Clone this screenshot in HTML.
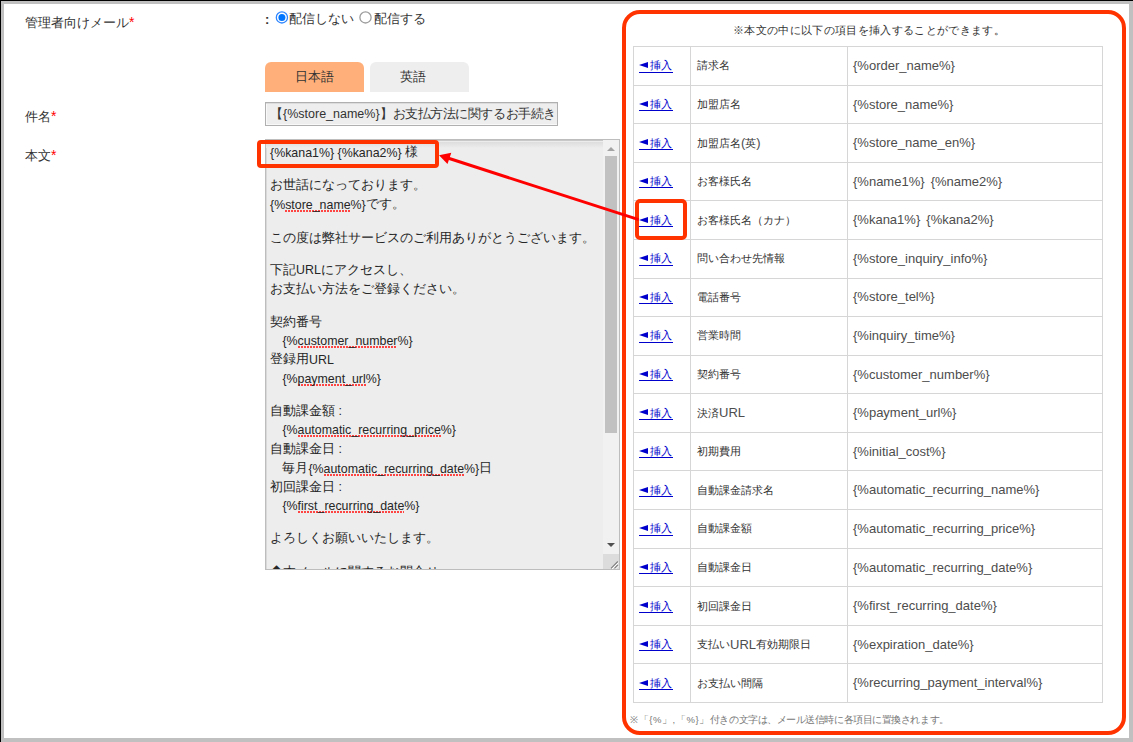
<!DOCTYPE html>
<html><head><meta charset="utf-8">
<style>
html,body{margin:0;padding:0;width:1133px;height:742px;overflow:hidden;background:#000;}
body{font-family:"Liberation Sans",sans-serif;color:#333;position:relative;}
.a{position:absolute;white-space:nowrap;}
#frame{position:absolute;left:1px;top:1px;width:1132px;height:741px;background:#c0c0c0;}
#page{position:absolute;left:4px;top:4px;width:1125px;height:734px;background:#fff;}
.lbl{font-size:13px;color:#333;line-height:16px;}
.req{color:#ff0000;position:relative;top:0px;font-size:14px;}
.radio{position:absolute;width:12px;height:12px;border-radius:50%;box-sizing:border-box;}
.tab{position:absolute;top:62px;height:30px;border-radius:6px 6px 0 0;font-size:13px;text-align:center;line-height:30px;color:#333;}
#subj{position:absolute;left:265px;top:102px;width:293px;height:24px;box-sizing:border-box;border:1px solid #b0b0b0;box-shadow:inset 0 1px 0 #dcdcdc,inset 1px -1px 0 #f9f9f9;background:#eeeeee;font-size:12.5px;line-height:22px;padding-left:4px;color:#333;white-space:nowrap;overflow:hidden;}
#ta{position:absolute;left:265px;top:139px;width:355px;height:431px;box-sizing:border-box;border:1px solid #bdbdbd;box-shadow:inset 1px 0 0 #d9d9d9;background:#ededed;overflow:hidden;}
.tl{position:absolute;font-size:12.9px;line-height:16px;color:#262626;white-space:nowrap;}
.sp{background-image:linear-gradient(45deg,transparent 40%,#f44 40%,#f44 60%,transparent 60%),linear-gradient(-45deg,transparent 40%,#f44 40%,#f44 60%,transparent 60%);background-size:3px 2px;background-repeat:repeat-x;background-position:0 100%;padding-bottom:0px;}
#sb{position:absolute;left:337px;top:0;width:16px;bottom:0;background:#f1f1f1;}
#thumb{position:absolute;left:2px;width:12px;top:16px;height:277px;background:#c1c1c1;}
#sbup{position:absolute;left:4px;top:6.5px;width:0;height:0;border-left:4px solid transparent;border-right:4px solid transparent;border-bottom:4px solid #a3a3a3;}
#sbdn{position:absolute;left:4px;top:403px;width:0;height:0;border-left:4px solid transparent;border-right:4px solid transparent;border-top:4px solid #505050;}
#grip{position:absolute;left:0;top:414px;width:16px;height:15px;background:#dcdcdc;}
#tbl .hl{position:absolute;left:633px;width:470px;height:1px;background:#d6d6d6;}
#tbl .vl{position:absolute;top:46px;height:657px;width:1px;background:#d6d6d6;}
#tbl .cl{position:absolute;font-size:11px;line-height:16px;color:#333;white-space:nowrap;}
.lnk{color:#0000cc;text-decoration:underline;}
#redframe{position:absolute;left:622px;top:10px;width:504px;height:725px;box-sizing:border-box;border:4px solid #ff3300;border-radius:18px;}
#box1{position:absolute;left:257px;top:140px;width:182px;height:28px;box-sizing:border-box;border:4px solid #ff3300;border-radius:4px;}
#box2{position:absolute;left:635px;top:199px;width:52px;height:41px;box-sizing:border-box;border:4px solid #ff3300;border-radius:5px;}
#hdr{position:absolute;left:733px;top:22.6px;font-size:11.3px;letter-spacing:0.33px;color:#333;white-space:nowrap;}
#foot{position:absolute;left:630px;top:713px;font-size:9.5px;color:#777;white-space:nowrap;}
#arrow{position:absolute;left:0;top:0;}

.tl .ln{font-size:12.4px;position:relative;top:0.5px;}
#tbl .cl .ln{font-size:13px;color:#4d4d4d;position:relative;top:0.7px;word-spacing:2.5px;}
#tbl .lnk{color:#0000cc;text-decoration:none;}
#tbl .tri{position:absolute;left:639px;width:0;height:0;border-right:9px solid #0000cc;border-top:3.5px solid transparent;border-bottom:3.5px solid transparent;}
#tbl .ul{position:absolute;left:639px;width:34px;height:1px;background:#0000cc;}
#tashade{position:absolute;left:0;top:0;width:337px;height:8px;background:linear-gradient(#c8c8c8 0px,#c8c8c8 1px,#ececec 1px,#ececec 2px,#dddddd 2px,#e2e2e2 4px,#ededed 8px);}

</style></head><body>
<div id="frame"></div>
<div id="page"></div>
<div class="a lbl" style="left:25px;top:14px;">管理者向けメール<span class="req">*</span></div>
<div class="a lbl" style="left:25px;top:108px;">件名<span class="req">*</span></div>
<div class="a lbl" style="left:25px;top:147px;">本文<span class="req">*</span></div>
<div class="a lbl" style="left:265px;top:11.5px;font-weight:bold;">:</div>
<svg style="position:absolute;left:275px;top:11px" width="14" height="14"><circle cx="6.9" cy="6.4" r="5.6" fill="#fff" stroke="#2f86ff" stroke-width="1.3"/><circle cx="6.9" cy="6.4" r="3.5" fill="#0075ff"/></svg>
<div class="a lbl" style="left:289px;top:11px;">配信しない</div>
<svg style="position:absolute;left:359px;top:11px" width="14" height="14"><circle cx="6.5" cy="6.4" r="5.6" fill="#fff" stroke="#9c9c9c" stroke-width="1.3"/></svg>
<div class="a lbl" style="left:374px;top:11px;">配信する</div>
<div class="tab" style="left:265px;width:99px;background:#ffb07a;">日本語</div>
<div class="tab" style="left:370px;width:99px;background:#eeeeee;text-indent:-14px;">英語</div>
<div id="subj">【{%store_name%}】<span style="letter-spacing:-0.45px">お支払方法に関するお手続き</span></div>
<div id="hdr">※本文の中に以下の項目を挿入することができます。</div>
<div id="ta"><div id="tashade"></div>
<div class="tl" style="top:4.3px;left:4.0px"><span class="ln">{%kana1%} {%kana2%}</span> 様</div>
<div class="tl" style="top:37.0px;left:4.0px">お世話になっております。</div>
<div class="tl" style="top:56.0px;left:4.0px"><span class="ln">{%<span class="sp">store_name</span>%}</span>です。</div>
<div class="tl" style="top:89.5px;left:4.0px">この度は弊社サービスのご利用ありがとうございます。</div>
<div class="tl" style="top:121.9px;left:4.0px">下記<span class="ln">URL</span>にアクセスし、</div>
<div class="tl" style="top:141.0px;left:4.0px">お支払い方法をご登録ください。</div>
<div class="tl" style="top:173.7px;left:4.0px">契約番号</div>
<div class="tl" style="top:192.7px;left:16.4px"><span class="ln">{%<span class="sp">customer_number</span>%}</span></div>
<div class="tl" style="top:211.2px;left:4.0px">登録用<span class="ln">URL</span></div>
<div class="tl" style="top:230.4px;left:16.4px"><span class="ln">{%<span class="sp">payment_url</span>%}</span></div>
<div class="tl" style="top:262.9px;left:4.0px">自動課金額 <span class="ln">:</span></div>
<div class="tl" style="top:281.9px;left:16.4px"><span class="ln">{%<span class="sp">automatic_recurring_price</span>%}</span></div>
<div class="tl" style="top:300.6px;left:4.0px">自動課金日 <span class="ln">:</span></div>
<div class="tl" style="top:320.0px;left:16.4px">毎月<span class="ln">{%<span class="sp">automatic_recurring_date</span>%}</span>日</div>
<div class="tl" style="top:338.8px;left:4.0px">初回課金日 <span class="ln">:</span></div>
<div class="tl" style="top:357.8px;left:16.4px"><span class="ln">{%<span class="sp">first_recurring_date</span>%}</span></div>
<div class="tl" style="top:389.6px;left:4.0px">よろしくお願いいたします。</div>
<div class="tl" style="top:423.5px;left:4.0px">◆本メールに関するお問合せ</div>
<div id="sb"><div id="sbup"></div><div id="thumb"></div><div id="sbdn"></div><div id="grip"><svg width="16" height="15" style="position:absolute;left:0;top:0"><path d="M9 15 L15.5 8.5 M12.5 15 L15.5 12" stroke="#fff" stroke-width="1" fill="none"/><path d="M8 14.3 L14.8 7.5 M11.5 14.3 L14.8 11" stroke="#808080" stroke-width="1.1" fill="none"/></svg></div></div>
</div>
<div id="tbl">
<div class="hl" style="top:46px"></div>
<div class="hl" style="top:85px"></div>
<div class="hl" style="top:123px"></div>
<div class="hl" style="top:162px"></div>
<div class="hl" style="top:200px"></div>
<div class="hl" style="top:239px"></div>
<div class="hl" style="top:278px"></div>
<div class="hl" style="top:316px"></div>
<div class="hl" style="top:355px"></div>
<div class="hl" style="top:393px"></div>
<div class="hl" style="top:432px"></div>
<div class="hl" style="top:470px"></div>
<div class="hl" style="top:509px"></div>
<div class="hl" style="top:548px"></div>
<div class="hl" style="top:586px"></div>
<div class="hl" style="top:625px"></div>
<div class="hl" style="top:663px"></div>
<div class="hl" style="top:702px"></div>
<div class="vl" style="left:633px"></div>
<div class="vl" style="left:690px"></div>
<div class="vl" style="left:847px"></div>
<div class="vl" style="left:1102px"></div>
<div class="tri" style="top:62.1px"></div><div class="cl lnk" style="top:57.3px;left:650px">挿入</div><div class="ul" style="top:72px"></div><div class="cl" style="top:57.3px;left:697px">請求名</div><div class="cl" style="top:57.3px;left:853px"><span class="ln">{%order_name%}</span></div>
<div class="tri" style="top:100.7px"></div><div class="cl lnk" style="top:95.9px;left:650px">挿入</div><div class="ul" style="top:110px"></div><div class="cl" style="top:95.9px;left:697px">加盟店名</div><div class="cl" style="top:95.9px;left:853px"><span class="ln">{%store_name%}</span></div>
<div class="tri" style="top:139.3px"></div><div class="cl lnk" style="top:134.5px;left:650px">挿入</div><div class="ul" style="top:149px"></div><div class="cl" style="top:134.5px;left:697px">加盟店名<span class="ln">(</span>英<span class="ln">)</span></div><div class="cl" style="top:134.5px;left:853px"><span class="ln">{%store_name_en%}</span></div>
<div class="tri" style="top:177.9px"></div><div class="cl lnk" style="top:173.1px;left:650px">挿入</div><div class="ul" style="top:187px"></div><div class="cl" style="top:173.1px;left:697px">お客様氏名</div><div class="cl" style="top:173.1px;left:853px"><span class="ln">{%name1%} {%name2%}</span></div>
<div class="tri" style="top:216.5px"></div><div class="cl lnk" style="top:211.7px;left:650px">挿入</div><div class="ul" style="top:226px"></div><div class="cl" style="top:211.7px;left:697px">お客様氏名（カナ）</div><div class="cl" style="top:211.7px;left:853px"><span class="ln">{%kana1%} {%kana2%}</span></div>
<div class="tri" style="top:255.0px"></div><div class="cl lnk" style="top:250.2px;left:650px">挿入</div><div class="ul" style="top:265px"></div><div class="cl" style="top:250.2px;left:697px">問い合わせ先情報</div><div class="cl" style="top:250.2px;left:853px"><span class="ln">{%store_inquiry_info%}</span></div>
<div class="tri" style="top:293.6px"></div><div class="cl lnk" style="top:288.8px;left:650px">挿入</div><div class="ul" style="top:303px"></div><div class="cl" style="top:288.8px;left:697px">電話番号</div><div class="cl" style="top:288.8px;left:853px"><span class="ln">{%store_tel%}</span></div>
<div class="tri" style="top:332.2px"></div><div class="cl lnk" style="top:327.4px;left:650px">挿入</div><div class="ul" style="top:342px"></div><div class="cl" style="top:327.4px;left:697px">営業時間</div><div class="cl" style="top:327.4px;left:853px"><span class="ln">{%inquiry_time%}</span></div>
<div class="tri" style="top:370.8px"></div><div class="cl lnk" style="top:366.0px;left:650px">挿入</div><div class="ul" style="top:380px"></div><div class="cl" style="top:366.0px;left:697px">契約番号</div><div class="cl" style="top:366.0px;left:853px"><span class="ln">{%customer_number%}</span></div>
<div class="tri" style="top:409.4px"></div><div class="cl lnk" style="top:404.6px;left:650px">挿入</div><div class="ul" style="top:419px"></div><div class="cl" style="top:404.6px;left:697px">決済<span class="ln">URL</span></div><div class="cl" style="top:404.6px;left:853px"><span class="ln">{%payment_url%}</span></div>
<div class="tri" style="top:448.0px"></div><div class="cl lnk" style="top:443.2px;left:650px">挿入</div><div class="ul" style="top:457px"></div><div class="cl" style="top:443.2px;left:697px">初期費用</div><div class="cl" style="top:443.2px;left:853px"><span class="ln">{%initial_cost%}</span></div>
<div class="tri" style="top:486.6px"></div><div class="cl lnk" style="top:481.8px;left:650px">挿入</div><div class="ul" style="top:496px"></div><div class="cl" style="top:481.8px;left:697px">自動課金請求名</div><div class="cl" style="top:481.8px;left:853px"><span class="ln">{%automatic_recurring_name%}</span></div>
<div class="tri" style="top:525.2px"></div><div class="cl lnk" style="top:520.4px;left:650px">挿入</div><div class="ul" style="top:535px"></div><div class="cl" style="top:520.4px;left:697px">自動課金額</div><div class="cl" style="top:520.4px;left:853px"><span class="ln">{%automatic_recurring_price%}</span></div>
<div class="tri" style="top:563.8px"></div><div class="cl lnk" style="top:559.0px;left:650px">挿入</div><div class="ul" style="top:573px"></div><div class="cl" style="top:559.0px;left:697px">自動課金日</div><div class="cl" style="top:559.0px;left:853px"><span class="ln">{%automatic_recurring_date%}</span></div>
<div class="tri" style="top:602.4px"></div><div class="cl lnk" style="top:597.6px;left:650px">挿入</div><div class="ul" style="top:612px"></div><div class="cl" style="top:597.6px;left:697px">初回課金日</div><div class="cl" style="top:597.6px;left:853px"><span class="ln">{%first_recurring_date%}</span></div>
<div class="tri" style="top:640.9px"></div><div class="cl lnk" style="top:636.1px;left:650px">挿入</div><div class="ul" style="top:650px"></div><div class="cl" style="top:636.1px;left:697px">支払い<span class="ln">URL</span>有効期限日</div><div class="cl" style="top:636.1px;left:853px"><span class="ln">{%expiration_date%}</span></div>
<div class="tri" style="top:679.5px"></div><div class="cl lnk" style="top:674.7px;left:650px">挿入</div><div class="ul" style="top:689px"></div><div class="cl" style="top:674.7px;left:697px">お支払い間隔</div><div class="cl" style="top:674.7px;left:853px"><span class="ln">{%recurring_payment_interval%}</span></div>
</div>
<div id="foot"><span style="letter-spacing:0.6px">※「{%」,「%}」</span><span style="letter-spacing:-0.45px">付きの文字は、メール送信時に各項目に置換されます。</span></div>
<div id="redframe"></div>
<div id="box1"></div>
<div id="box2"></div>
<svg id="arrow" width="1133" height="742"><line x1="638.7" y1="219.6" x2="447" y2="157.8" stroke="#ff0000" stroke-width="3"/><polygon points="439,155.2 451.3,152.8 447.5,164" fill="#ff0000"/></svg>
</body></html>
